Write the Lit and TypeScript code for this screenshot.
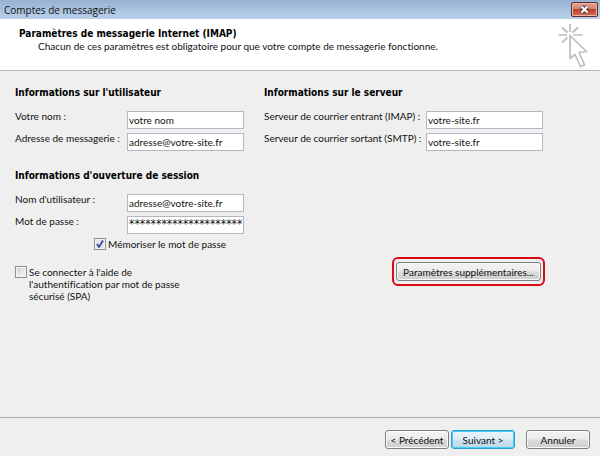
import { LitElement, html, css } from "lit";
import { customElement } from "lit/decorators.js";

@customElement("app-root")
export class AppRoot extends LitElement {
  static styles = css`
    :host {
      display: flex;
      flex-direction: column;
      min-height: 100vh;
      background: #efefef;
      color: #111;
      font: 10px/12px Lato, "Noto Sans", sans-serif;
      font-variant-ligatures: none;
    }
    * { box-sizing: border-box; }
    h1, h2, p { margin: 0; font-size: 10px; line-height: 12px; }
    h1, h2 { color: #000; font-family: "DejaVu Sans Condensed", "DejaVu Sans", sans-serif; }
    .titlebar {
      display: flex;
      align-items: center;
      justify-content: space-between;
      height: 19px;
      padding: 0 2px 0 4px;
      background: linear-gradient(#97b3d2, #b9d1ea);
      font: 10px/18px "Open Sans", "Noto Sans", sans-serif;
    }
    .close {
      display: flex;
      align-items: center;
      justify-content: center;
      width: 27px;
      height: 15px;
      padding: 0;
      border: 1px solid #5c2a32;
      border-radius: 2px;
      background: linear-gradient(#e3a596 0%, #d5806f 45%, #bd4028 50%, #d0705a 100%);
      box-shadow: inset 0 0 0 1px #ecb5a8;
    }
    .header {
      display: flex;
      justify-content: space-between;
      height: 52px;
      padding: 9px 10px 0 19px;
      background: #fff;
      border-bottom: 1px solid #b8b8b8;
    }
    .header p { padding-left: 19px; }
    .header svg { margin-top: -6px; }
    main { flex: 1; padding: 16px 15px 0; }
    .columns { display: grid; grid-template-columns: 249px 1fr; align-items: start; }
    .fields {
      display: grid;
      grid-template-columns: 112px 117px;
      row-gap: 4px;
      margin-top: 12px;
    }
    .server .fields { grid-template-columns: 162px 117px; }
    .fields label { white-space: nowrap; line-height: 10px; }
    .fields input {
      width: 100%;
      height: 18px;
      padding: 0 1px;
      border: 1px solid #b4b7c0;
      border-radius: 0;
      background: #fff;
      color: #111;
      font: inherit;
      outline: none;
    }
    .fields .secret {
      padding-bottom: 2px;
      font: 12px/12px "DejaVu Sans Condensed", "DejaVu Sans", sans-serif;
    }
    .session { margin-top: 19px; }
    .check { display: flex; gap: 2px; }
    .check input {
      appearance: none;
      flex: none;
      width: 12px;
      height: 12px;
      margin: 0;
      border: 1px solid #8e8f8f;
      background: linear-gradient(135deg, #cfd2d6, #f8f8f8);
      box-shadow: inset 0 0 0 1px #f4f4f4;
    }
    .check input:checked {
      background: url("data:image/svg+xml,%3Csvg xmlns='http://www.w3.org/2000/svg' viewBox='0 0 10 10'%3E%3Cpath d='M2 5l2 3L8 1.5' fill='none' stroke='%233d579b' stroke-width='2'/%3E%3C/svg%3E") center / 10px 10px no-repeat, #e4e7ec;
    }
    .remember { padding: 4px 0 0 79px; }
    .options {
      display: flex;
      justify-content: space-between;
      align-items: flex-start;
      padding-right: 40px;
      margin-top: 7px;
    }
    .spa { width: 170px; margin-top: 9px; }
    .ring { border: 2px solid #dc0a14; border-radius: 6px; padding: 3px 2px; }
    .btn {
      width: 64px;
      height: 19px;
      padding: 0;
      border: 1px solid #808080;
      border-radius: 3px;
      background: linear-gradient(#f3f3f3 0%, #ebebeb 48%, #dcdcdc 52%, #cfcfcf 100%);
      box-shadow: inset 0 0 0 1px #fafafa;
      color: #111;
      font: inherit;
      white-space: nowrap;
    }
    .more { display: block; width: 145px; }
    .next {
      border-color: #2c9fd0;
      background: linear-gradient(#eaf4fa 0%, #dfeef7 48%, #cbe2f0 52%, #bcd8e8 100%);
      box-shadow: inset 0 0 0 1px #43d0f6;
    }
    footer {
      display: flex;
      justify-content: flex-end;
      gap: 2px;
      height: 39px;
      padding: 12px 10px 0;
      border-top: 1px solid #adadad;
    }
    .cancel { margin-left: 9px; }
  `;

  render() {
    return html`
      <div class="titlebar">
        <span>Comptes de messagerie</span>
        <button class="close" aria-label="Fermer">
          <svg width="11" height="9" viewBox="0 0 11 9">
            <path d="M2.500 1.500l6 6M8.500 1.500l-6 6" stroke="#4e3a42" stroke-width="4" />
            <path d="M2.500 1.500l6 6M8.500 1.500l-6 6" stroke="#fff" stroke-width="2.200" />
          </svg>
        </button>
      </div>
      <header class="header">
        <div>
          <h1>Paramètres de messagerie Internet (IMAP)</h1>
          <p>Chacun de ces paramètres est obligatoire pour que votre compte de messagerie fonctionne.</p>
        </div>
        <svg width="34" height="46" viewBox="556 22 34 46" fill="none" stroke="#bebebe" stroke-width="1.7" aria-hidden="true">
          <path d="M570 24v8M558.500 35h8.500M573.500 35h9M562 27.500l5.500 5M578 27.500l-5.500 5M562 42.500l5.500-5" />
          <path d="M570 35.500v23l5-4 5.500 12 4-1.500-5.500-12.500 7.500-1z" stroke-linejoin="round" />
        </svg>
      </header>
      <main>
        <div class="columns">
          <section>
            <h2>Informations sur l'utilisateur</h2>
            <div class="fields">
              <label for="name">Votre nom :</label>
              <input id="name" value="votre nom" />
              <label for="mail">Adresse de messagerie :</label>
              <input id="mail" value="adresse@votre-site.fr" />
            </div>
          </section>
          <section class="server">
            <h2>Informations sur le serveur</h2>
            <div class="fields">
              <label for="imap">Serveur de courrier entrant (IMAP) :</label>
              <input id="imap" value="votre-site.fr" />
              <label for="smtp">Serveur de courrier sortant (SMTP) :</label>
              <input id="smtp" value="votre-site.fr" />
            </div>
          </section>
        </div>
        <section class="session">
          <h2>Informations d'ouverture de session</h2>
          <div class="fields">
            <label for="user">Nom d'utilisateur :</label>
            <input id="user" value="adresse@votre-site.fr" />
            <label for="pass">Mot de passe :</label>
            <input id="pass" class="secret" value="*********************" />
          </div>
          <label class="check remember"><input type="checkbox" checked />Mémoriser le mot de passe</label>
        </section>
        <div class="options">
          <label class="check spa"><input type="checkbox" /><span>Se connecter à l'aide de l'authentification par mot de passe sécurisé (SPA)</span></label>
          <div class="ring"><button class="btn more">Paramètres supplémentaires...</button></div>
        </div>
      </main>
      <footer>
        <button class="btn">&lt; Précédent</button>
        <button class="btn next">Suivant &gt;</button>
        <button class="btn cancel">Annuler</button>
      </footer>
    `;
  }
}
